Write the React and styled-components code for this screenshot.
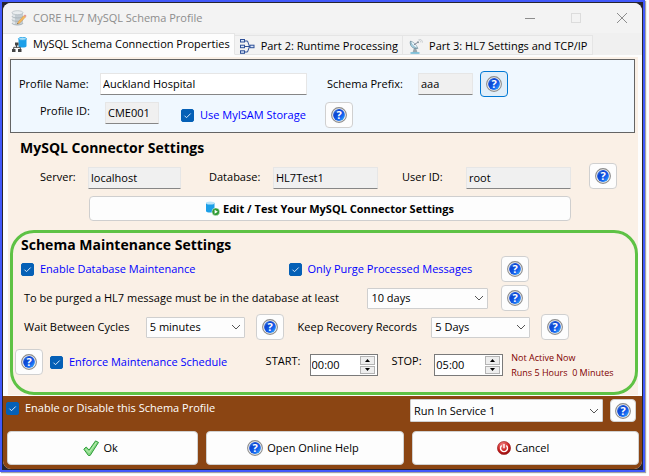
import React, { useState } from 'react';
import styled, { createGlobalStyle } from 'styled-components';

const GlobalStyle = createGlobalStyle`
  *, *::before, *::after { box-sizing: border-box; }
  body { margin: 0; background: #fff; }
  body, button, input, select {
    font-family: "Open Sans", "Noto Sans", sans-serif;
    font-size: 11px;
    line-height: 16px;
    color: #000;
  }
`;

const Frame = styled.div`
  margin: 0 4px 3px 0;
  border: 2px solid #4159fb;
  background: #26242f;
  padding: 1px;
  box-shadow: 1px 1px 1px #a5a5a5;
`;

const Window = styled.main`
  border-radius: 8px;
  overflow: hidden;
  background: #f0f0f0;
`;

const TitleBar = styled.header`
  display: flex;
  align-items: center;
  height: 30px;
  padding: 0 10px 0 8px;
  gap: 6px;
  background: #f3f3f3;
`;

const Title = styled.h1`
  flex: 1;
  margin: 0;
  font-size: 11px;
  font-weight: 400;
  color: #8d8d8d;
`;

const WindowButtons = styled.div`
  display: flex;
  gap: 26px;
`;

const WindowButton = styled.button`
  display: grid;
  place-items: center;
  width: 20px;
  height: 20px;
  padding: 0;
  border: 0;
  background: none;
`;

const TabBar = styled.nav`
  display: flex;
  align-items: flex-end;
  height: 22px;
`;

const Tab = styled.button`
  display: flex;
  align-items: center;
  gap: 6px;
  height: ${(p) => (p.$active ? 22 : 20)}px;
  padding: ${(p) => (p.$active ? '0 4px 0 9px' : '2px 4px 0 5px')};
  border: 1px solid #e5e5e5;
  border-left-width: 0;
  border-bottom-color: ${(p) => (p.$active ? '#fdfdfd' : '#e5e5e5')};
  background: ${(p) => (p.$active ? '#fdfdfd' : '#f3f3f3')};
  white-space: nowrap;
`;

const TabPage = styled.div`
  padding: 2px 4px 1px 5px;
  background: #fdfdfd;
`;

const Linen = styled.div`
  padding: 2px 0 0 2px;
  background: #faf0e6;
`;

const ProfilePanel = styled.section`
  display: grid;
  gap: 5px;
  margin-right: 3px;
  padding: 11px 0 4px 8px;
  border: 1px solid #646464;
  background: #f0f8ff;
`;

const shrinkable = (cols) => cols.replace(/\d+fr/g, (track) => `minmax(0, ${track})`);

const Row = styled.div`
  display: grid;
  grid-template-columns: ${(p) => shrinkable(p.$cols)};
  align-items: ${(p) => p.$align || 'center'};
`;

const Label = styled.label`
  padding-left: ${(p) => p.$indent || 0}px;
  line-height: ${(p) => p.$line || 24}px;
  white-space: nowrap;
`;

const TextBox = styled.input`
  width: 100%;
  min-width: 0;
  height: 22px;
  padding: 0 2px 1px;
  border: 1px solid #e6e6e6;
  border-bottom-color: #868686;
  border-radius: 1px;
  background: ${(p) => (p.readOnly ? '#f0f0f0' : '#fff')};
`;

const HelpBox = styled.button`
  display: grid;
  place-items: center;
  width: ${(p) => (p.$small ? 26 : 28)}px;
  height: ${(p) => (p.$small ? 23 : 26)}px;
  padding: 0;
  border: 1px solid ${(p) => (p.$focused ? '#0078d4' : '#d0d0d0')};
  border-radius: 4px;
  background: ${(p) => (p.$focused ? '#e0eef9' : '#fdfdfd')};
`;

const CheckLabel = styled.label`
  display: flex;
  align-items: center;
  gap: 6px;
  height: ${(p) => (p.$light ? 18 : 26)}px;
  padding-left: ${(p) => p.$indent || 0}px;
  color: ${(p) => (p.$light ? '#fff' : '#0000ff')};
  white-space: nowrap;
`;

const CheckSlot = styled.span`
  display: grid;
  width: 13px;
  height: 13px;
  & > * { grid-area: 1 / 1; }
  & > svg { pointer-events: none; }
`;

const CheckInput = styled.input`
  appearance: none;
  width: 13px;
  height: 13px;
  margin: 0;
  border: 1px solid #005a9e;
  border-radius: 2px;
  background: #fff;
  &:checked { background: #0560b6; border-color: #0560b6; }
`;

const SectionTitle = styled.h2`
  margin: 0;
  padding-left: 10px;
  font-size: 14px;
  line-height: 20px;
  font-weight: 700;
`;

const Connector = styled.section`
  padding: 5px 0 9px;
`;

const ConnectorRow = styled(Row)`
  margin-top: 5px;
`;

const EditButton = styled.button`
  display: flex;
  align-items: center;
  justify-content: center;
  gap: 3px;
  height: 25px;
  margin: 7px 67px 0 79px;
  width: calc(100% - 146px);
  border: 1px solid #cfcfcf;
  border-radius: 4px;
  background: #fdfdfd;
  font-weight: 700;
`;

const Maintenance = styled.section`
  padding: 2px 0 12px;
  border: 3px solid #5ec245;
  border-radius: 24px;
  ${SectionTitle} { padding-left: 8px; }
`;

const MaintenanceRows = styled.div`
  display: grid;
  grid-template-columns: minmax(0, 1fr);
  row-gap: 3px;
  margin-top: 1px;
`;

const SelectSlot = styled.div`
  display: grid;
  align-items: center;
  & > * { grid-area: 1 / 1; }
  & > svg { justify-self: end; margin-right: 4px; pointer-events: none; }
`;

const Select = styled.select`
  appearance: none;
  width: 100%;
  min-width: 0;
  height: ${(p) => (p.$tall ? 23 : 21)}px;
  padding: 0 18px 0 3px;
  border: 1px solid #cfcfcf;
  border-radius: 1px;
  background: #fdfdfd;
`;

const SpinFrame = styled.div`
  display: flex;
  height: 22px;
  border: 1px solid #7a7a7a;
  background: #fff;
`;

const SpinInput = styled.input`
  flex: 1;
  min-width: 0;
  padding: 0 1px;
  border: 0;
  background: transparent;
`;

const SpinButtons = styled.div`
  display: grid;
  gap: 1px;
  width: 15px;
  margin: 1px 2px;
`;

const SpinButton = styled.button`
  display: grid;
  place-items: center;
  min-height: 0;
  padding: 0;
  border: 1px solid #b4b4b4;
  background: #eee;
`;

const Status = styled.p`
  margin: 0;
  padding: 1px 0 0 8px;
  font-size: 9px;
  line-height: 15px;
  color: #800000;
  white-space: pre;
`;

const ScheduleRow = styled(Row)`
  margin-top: 6px;
  ${SpinFrame} { margin-top: 5px; }
`;

const Footer = styled.footer`
  padding: 3px 3px 4px;
  background: #8b4513;
`;

const Actions = styled.div`
  display: grid;
  grid-template-columns: 191fr 197fr 227fr;
  gap: 8px;
  margin: 9px 0 0 1px;
`;

const ActionButton = styled.button`
  display: flex;
  align-items: center;
  justify-content: center;
  gap: 4px;
  height: 34px;
  padding: 0 10px 0 6px;
  border: 1px solid #d0d0d0;
  border-radius: 4px;
  background: #fdfdfd;
`;

function HelpIcon() {
  return (
    <svg width="16" height="16" viewBox="0 0 16 16" aria-hidden="true">
      <defs>
        <linearGradient id="helpBlue" x1="0" y1="0" x2="1" y2="1">
          <stop offset="0" stopColor="#5fa0f4" />
          <stop offset="0.3" stopColor="#0d45d0" />
          <stop offset="0.65" stopColor="#1460ee" />
          <stop offset="1" stopColor="#3cc0ff" />
        </linearGradient>
      </defs>
      <circle cx="8" cy="8" r="7.4" fill="#f4f4f4" stroke="#8c8c8c" strokeWidth="1.1" />
      <circle cx="8" cy="8" r="5.9" fill="url(#helpBlue)" />
      <text x="8" y="12" textAnchor="middle" fontSize="11" fontWeight="700" fill="#fff">?</text>
    </svg>
  );
}

function Help({ topic, ...rest }) {
  return (
    <HelpBox type="button" aria-label={`Help: ${topic}`} {...rest}>
      <HelpIcon />
    </HelpBox>
  );
}

function Check({ children, $indent, $light }) {
  const [on, setOn] = useState(true);
  return (
    <CheckLabel $indent={$indent} $light={$light}>
      <CheckSlot>
        <CheckInput type="checkbox" checked={on} onChange={() => setOn(!on)} />
        {on && (
          <svg width="13" height="13" viewBox="0 0 13 13" aria-hidden="true">
            <path d="M3.5 6.7 5.5 8.7 9.7 4.5" fill="none" stroke="#d6e8fa" strokeWidth="1" />
          </svg>
        )}
      </CheckSlot>
      {children}
    </CheckLabel>
  );
}

function Dropdown({ id, value, label, $tall }) {
  return (
    <SelectSlot>
      <Select id={id} defaultValue={value} aria-label={label} $tall={$tall}>
        <option>{value}</option>
      </Select>
      <svg width="10" height="10" viewBox="0 0 10 10" aria-hidden="true">
        <path d="M1 3 5 7 9 3" fill="none" stroke="#555" strokeWidth="1" />
      </svg>
    </SelectSlot>
  );
}

function TimeSpin({ id, value }) {
  return (
    <SpinFrame>
      <SpinInput id={id} type="text" defaultValue={value} />
      <SpinButtons>
        <SpinButton type="button" aria-label="Later">
          <svg width="5" height="3" viewBox="0 0 5 3"><path d="M0 3 2.5 0 5 3z" /></svg>
        </SpinButton>
        <SpinButton type="button" aria-label="Earlier">
          <svg width="5" height="3" viewBox="0 0 5 3"><path d="M0 0 2.5 3 5 0z" /></svg>
        </SpinButton>
      </SpinButtons>
    </SpinFrame>
  );
}

function ProfileIcon() {
  return (
    <svg width="16" height="16" viewBox="0 0 16 16" aria-hidden="true">
      <path d="M1 3v10c0 3 11 3 11 0V3z" fill="#c3ccd2" />
      <path d="M1 3v10c0 1.400 1.500 2 3 2.200V3z" fill="#dfe4e7" />
      <ellipse cx="6.500" cy="2.700" rx="5.500" ry="2" fill="#e9edef" stroke="#a9b3b9" strokeWidth=".6" />
      <path d="M1 6.200c0 2.300 11 2.300 11 0M1 9.600c0 2.300 11 2.300 11 0M1 13c0 2.600 11 2.600 11 0" fill="none" stroke="#a3adb4" strokeWidth=".8" />
      <path d="M6.300 14 7.200 11.800 12.900 5.600 14.500 7.100 8.600 13.200z" fill="#f5b95f" stroke="#c98a3c" strokeWidth=".4" />
      <path d="M12.900 5.600 14 4.500 15.600 6 14.500 7.100z" fill="#e08c8e" />
      <path d="M6.300 14 6.700 13 7.400 13.600z" fill="#333" />
    </svg>
  );
}

function SchemaIcon() {
  return (
    <svg width="15" height="15" viewBox="0 0 15 15" aria-hidden="true">
      <path d="M6.500 1.500h8v7.500c0 2-8 2-8 0z" fill="#1c9fe8" />
      <ellipse cx="10.500" cy="1.800" rx="4" ry="1.500" fill="#a8def8" stroke="#1c9fe8" strokeWidth=".8" />
      <path d="M4.500 6.500v4M1.700 12v-1.700h6.600V12" fill="none" stroke="#444" />
      <rect x="3" y="5.500" width="3.500" height="3" fill="#444" />
      <rect x="0" y="12" width="3.500" height="3" fill="#444" />
      <rect x="6" y="12" width="3.500" height="3" fill="#444" />
    </svg>
  );
}

function RuntimeIcon() {
  return (
    <svg width="15" height="15" viewBox="0 0 15 15" aria-hidden="true">
      <g fill="#d9e6fb" stroke="#2f5097">
        <path d="M5 2h2.500l2 5.500-2 5.500H5M5 7.500h5" fill="none" />
        <rect x=".5" y=".5" width="4" height="2.500" />
        <rect x=".5" y="6.200" width="4" height="2.500" />
        <rect x=".5" y="11.800" width="4" height="2.500" />
        <rect x="10" y="6.200" width="4" height="2.500" />
      </g>
    </svg>
  );
}

function DishIcon() {
  return (
    <svg width="15" height="15" viewBox="0 0 15 15" aria-hidden="true">
      <path d="M6 9 4.500 13.500h5L8 9z" fill="#9aa7ad" />
      <path d="M2.500 2C1.200 6 4.500 10.500 9.700 9.300z" fill="#a9dcf0" stroke="#62808e" strokeWidth=".7" />
      <path d="M2.500 2C5 2.500 9 6 9.700 9.300 6 8.500 3.300 5.500 2.500 2z" fill="#e6f5fb" stroke="#62808e" strokeWidth=".5" />
      <path d="M6 5.800 10 3.200" stroke="#667" strokeWidth=".8" />
      <circle cx="10" cy="3.200" r="1" fill="#8a979d" />
      <path d="M10.500 1c1.300 0 2.300 1 2.300 2.400M10.500 0c2.500 0 4 1.500 4 3.600" fill="none" stroke="#b8bfc3" strokeWidth=".7" />
      <path d="M2.500 14h9" stroke="#68b7d4" strokeWidth="1.500" />
    </svg>
  );
}

function DatabaseRunIcon() {
  return (
    <svg width="14" height="15" viewBox="0 0 14 15" aria-hidden="true">
      <path d="M0 2v8c0 2 8.500 2 8.500 0V2z" fill="#1c9fe8" />
      <ellipse cx="4.250" cy="2" rx="4.250" ry="1.500" fill="#b9e4fa" />
      <circle cx="9.800" cy="10.800" r="3.900" fill="#2f9b33" stroke="#fff" strokeWidth=".5" />
      <path d="M8.600 8.800v4l3.200-2z" fill="#fff" />
    </svg>
  );
}

function OkIcon() {
  return (
    <svg width="16" height="16" viewBox="0 0 16 16" aria-hidden="true">
      <path d="M.8 9.200 3.200 7l2.900 3L12.500.9l3.000 1.500-8.300 13-1.800.1z" fill="#86d884" stroke="#2f9c3a" strokeWidth="1" strokeLinejoin="round" />
      <path d="m2.500 9 3.600 3.600 7.300-10.300" fill="none" stroke="#bff0b6" strokeWidth="1" />
    </svg>
  );
}

function CancelIcon() {
  return (
    <svg width="14" height="14" viewBox="0 0 14 14" aria-hidden="true">
      <defs>
        <radialGradient id="powerRed" cx=".4" cy=".25" r=".8">
          <stop offset="0" stopColor="#f08080" />
          <stop offset=".6" stopColor="#c91f1f" />
          <stop offset="1" stopColor="#8d0c0c" />
        </radialGradient>
      </defs>
      <circle cx="7" cy="7" r="6.600" fill="url(#powerRed)" stroke="#9c2020" strokeWidth=".6" />
      <path d="M4.700 4.500a3.500 3.500 0 1 0 4.600 0M7 3v4.200" fill="none" stroke="#fff" strokeWidth="1.400" />
    </svg>
  );
}

export default function App() {
  return (
    <>
      <GlobalStyle />
      <Frame>
        <Window>
          <TitleBar>
            <ProfileIcon />
            <Title>CORE HL7 MySQL Schema Profile</Title>
            <WindowButtons>
              <WindowButton type="button" aria-label="Minimize">
                <svg width="10" height="10" viewBox="0 0 10 10"><path d="M0 5.500h10" stroke="#8d8d8d" /></svg>
              </WindowButton>
              <WindowButton type="button" aria-label="Maximize" disabled>
                <svg width="10" height="10" viewBox="0 0 10 10"><rect x=".5" y=".5" width="9" height="9" fill="none" stroke="#dcdcdc" /></svg>
              </WindowButton>
              <WindowButton type="button" aria-label="Close">
                <svg width="10" height="10" viewBox="0 0 10 10"><path d="m0 0 10 10M10 0 0 10" stroke="#8d8d8d" /></svg>
              </WindowButton>
            </WindowButtons>
          </TitleBar>

          <TabBar>
            <Tab type="button" $active><SchemaIcon />MySQL Schema Connection Properties</Tab>
            <Tab type="button"><RuntimeIcon />Part 2: Runtime Processing</Tab>
            <Tab type="button"><DishIcon />Part 3: HL7 Settings and TCP/IP</Tab>
          </TabBar>

          <TabPage>
            <Linen>
              <ProfilePanel>
                <Row $cols="81fr 207fr 111fr 55fr 7fr 28px 126fr">
                  <Label htmlFor="name">Profile Name:</Label>
                  <TextBox id="name" defaultValue="Auckland Hospital" />
                  <Label htmlFor="prefix" $indent={20}>Schema Prefix:</Label>
                  <TextBox id="prefix" readOnly value="aaa" />
                  <span />
                  <Help topic="schema prefix" $focused />
                </Row>
                <Row $cols="86fr 54fr 166fr 28px 281fr" $align="start">
                  <Label htmlFor="pid" $indent={21} $line={18}>Profile ID:</Label>
                  <TextBox id="pid" readOnly value="CME001" />
                  <Check $indent={22}>Use MyISAM Storage</Check>
                  <Help topic="MyISAM storage" />
                </Row>
              </ProfilePanel>

              <Connector>
                <SectionTitle>MySQL Connector Settings</SectionTitle>
                <ConnectorRow $cols="78fr 93fr 92fr 105fr 88fr 105fr 18fr 28px 21fr" $align="end">
                  <Label htmlFor="server" $indent={30}>Server:</Label>
                  <TextBox id="server" readOnly value="localhost" />
                  <Label htmlFor="db" $indent={28}>Database:</Label>
                  <TextBox id="db" readOnly value="HL7Test1" />
                  <Label htmlFor="user" $indent={24}>User ID:</Label>
                  <TextBox id="user" readOnly value="root" />
                  <span />
                  <Help topic="connector" />
                </ConnectorRow>
                <EditButton type="button"><DatabaseRunIcon />Edit / Test Your MySQL Connector Settings</EditButton>
              </Connector>

              <Maintenance>
                <SectionTitle>Schema Maintenance Settings</SectionTitle>
                <MaintenanceRows>
                  <Row $cols="276fr 213fr 28px 106fr">
                    <Check $indent={8}>Enable Database Maintenance</Check>
                    <Check>Only Purge Processed Messages</Check>
                    <Help topic="database maintenance" />
                  </Row>
                  <Row $cols="355fr 121fr 13fr 28px 106fr">
                    <Label htmlFor="keep" $indent={11}>To be purged a HL7 message must be in the database at least</Label>
                    <Dropdown id="keep" value="10 days" />
                    <span />
                    <Help topic="purge age" />
                  </Row>
                  <Row $cols="133fr 99fr 11fr 28px 148fr 99fr 11fr 28px 66fr">
                    <Label htmlFor="wait" $indent={11}>Wait Between Cycles</Label>
                    <Dropdown id="wait" value="5 minutes" />
                    <span />
                    <Help topic="wait between cycles" />
                    <Label htmlFor="recovery" $indent={14}>Keep Recovery Records</Label>
                    <Dropdown id="recovery" value="5 Days" />
                    <span />
                    <Help topic="recovery records" />
                  </Row>
                  <ScheduleRow $cols="2px 28px 223fr 44fr 69fr 56fr 69fr 132fr" $align="start">
                    <span />
                    <Help topic="maintenance schedule" />
                    <Check $indent={7}>Enforce Maintenance Schedule</Check>
                    <Label htmlFor="start">START:</Label>
                    <TimeSpin id="start" value="00:00" />
                    <Label htmlFor="stop" $indent={13}>STOP:</Label>
                    <TimeSpin id="stop" value="05:00" />
                    <Status>{'Not Active Now\nRuns 5 Hours  0 Minutes'}</Status>
                  </ScheduleRow>
                </MaintenanceRows>
              </Maintenance>
            </Linen>
          </TabPage>

          <Footer>
            <Row $cols="404fr 193fr 7fr 26px 3fr" $align="start">
              <Check $light>Enable or Disable this Schema Profile</Check>
              <Dropdown value="Run In Service 1" label="Run in service" $tall />
              <span />
              <Help topic="service" $small />
            </Row>
            <Actions>
              <ActionButton type="button"><OkIcon />Ok</ActionButton>
              <ActionButton type="button"><HelpIcon />Open Online Help</ActionButton>
              <ActionButton type="button"><CancelIcon />Cancel</ActionButton>
            </Actions>
          </Footer>
        </Window>
      </Frame>
    </>
  );
}
